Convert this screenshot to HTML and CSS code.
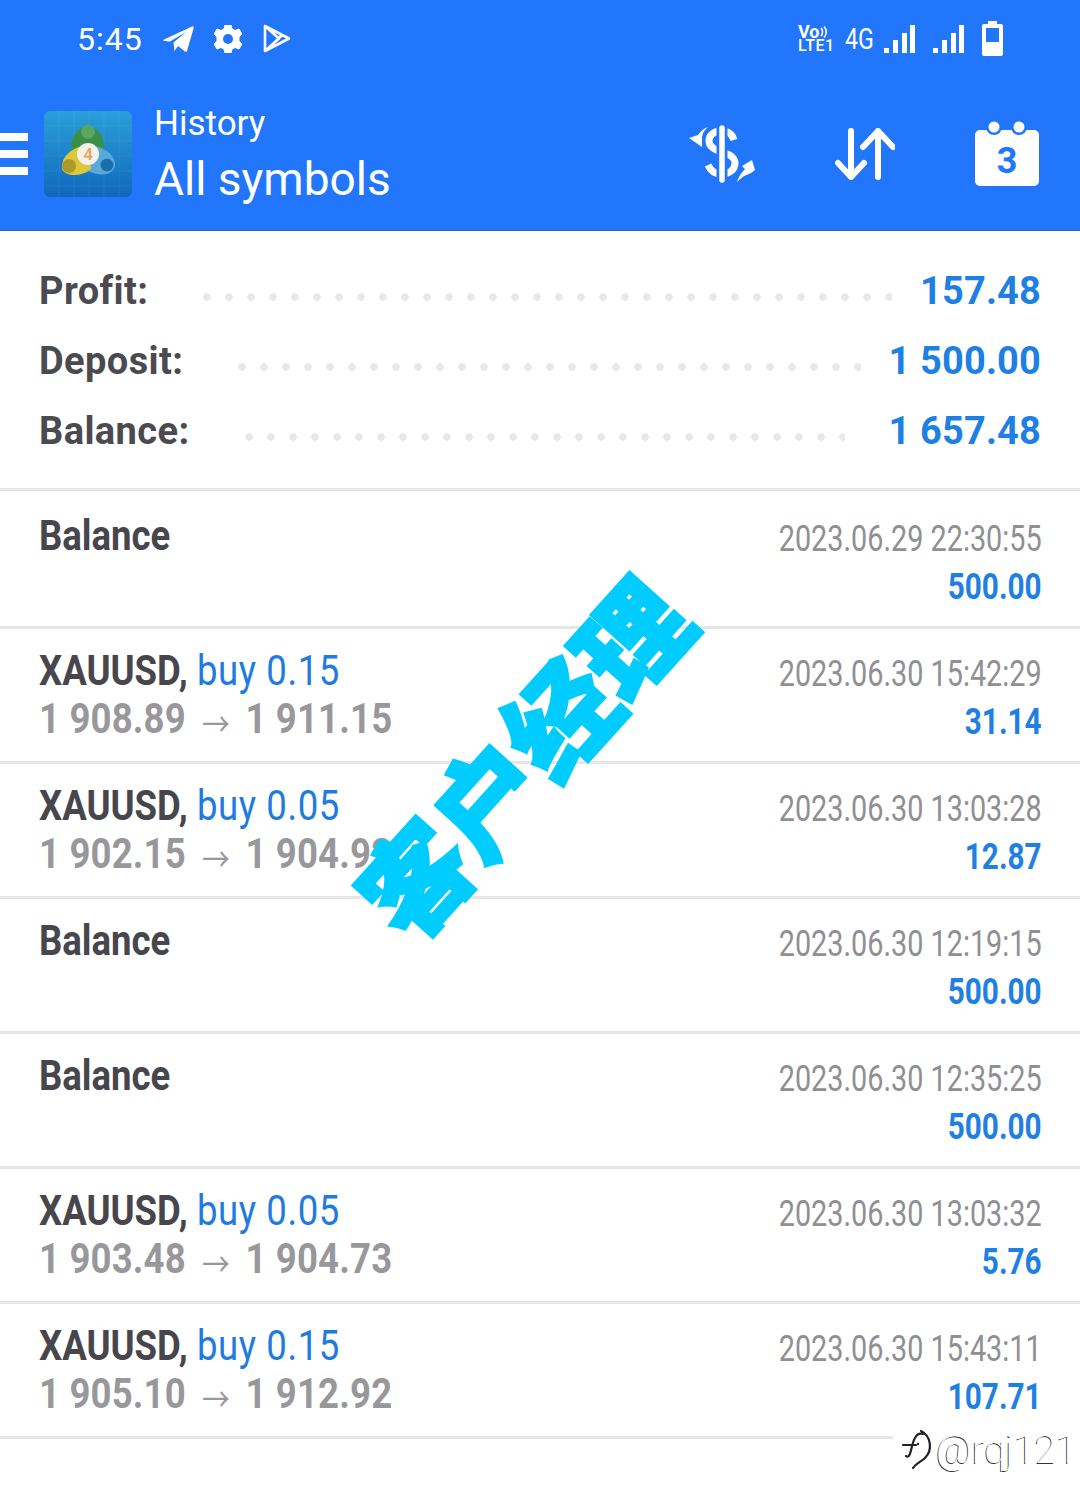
FILE: index.html
```html
<!DOCTYPE html>
<html lang="en">
<head>
  <meta charset="UTF-8">
  <title>History</title>
  <link rel="stylesheet" href="styles.css">
</head>
<body>
  <div class="page">
    <div class="header">
      <div class="status">
        <div class="status-left">
          <span class="time">5:45</span>
          <svg class="ic-send" viewBox="0 0 31 26"><path d="M1 13.500 29 .5C30.500 0 31 1 30.500 2.500L24 25C23.500 26 22.500 26 22 25.500L15 20 11.500 25 10.500 16.500 23 6 7 15.500 1.500 15C0 15 0 14 1 13.500Z" fill="#fff"/></svg>
          <svg class="ic-gear" viewBox="0 0 28 28"><path d="M11 0h6l1 4 3 1.500 4-1.500 3 5-3 3v4l3 3-3 5-4-1.500-3 1.500-1 4h-6l-1-4-3-1.500-4 1.500-3-5 3-3v-4l-3-3 3-5 4 1.500 3-1.500Z" fill="#fff" stroke="#fff" stroke-linejoin="round"/><circle cx="14" cy="14" r="5" fill="#2176fb"/></svg>
          <svg class="ic-play" viewBox="0 0 29 29"><path d="M3 2 27 14.500 3 27Z M3 2 17 14.500 3 27 M10 21 20 11" fill="none" stroke="#fff" stroke-width="2.600" stroke-linejoin="round"/></svg>
        </div>
        <div class="status-right">
          <div class="volte">
            <div class="volte-top">Vo<svg class="ic-waves" viewBox="0 0 9 14"><path d="M1 3C3 5 3 9 1 11M4 1.500C7 4.500 7 9.500 4 12.500" fill="none" stroke="#fff" stroke-width="1.600"/></svg></div>
            <div class="volte-bottom">LTE1</div>
          </div>
          <span class="net">4G</span>
          <svg class="ic-signal" viewBox="0 0 31 28"><path d="M0 23h5v5H0ZM9 15h5v13H9ZM18 8h5v20h-5ZM26 0h5v28h-5Z" fill="#fff"/></svg>
          <svg class="ic-signal" viewBox="0 0 31 28"><path d="M0 23h5v5H0ZM9 15h5v13H9ZM18 8h5v20h-5ZM26 0h5v28h-5Z" fill="#fff"/></svg>
          <svg class="ic-battery" viewBox="0 0 21 35"><path d="M6 0h9v3h4a2 2 0 0 1 2 2v28a2 2 0 0 1-2 2H2a2 2 0 0 1-2-2V5a2 2 0 0 1 2-2h4Z" fill="#fff"/><rect x="4" y="7" width="13" height="14" fill="#2176fb"/></svg>
        </div>
      </div>
      <div class="toolbar">
        <div class="burger"><i></i><i></i><i></i></div>
        <svg class="logo" viewBox="0 0 88 86">
          <defs>
            <linearGradient id="tile" x1="0" y1="0" x2="0" y2="1">
              <stop offset="0" stop-color="#2b9fd8"/>
              <stop offset="1" stop-color="#1068bd"/>
            </linearGradient>
          </defs>
          <rect width="88" height="86" rx="6" fill="url(#tile)"/>
          <path d="M15 0V86M30 0V86M45 0V86M60 0V86M75 0V86M0 15H88M0 30H88M0 45H88M0 60H88M0 75H88" stroke="#fff" stroke-opacity=".06"/>
          <path d="M27 38C27 22 36 16 44 16C53 16 61 24 60 40L44 46Z" fill="#3c8f48"/>
          <circle cx="44" cy="21" r="7" fill="#58a860"/>
          <path d="M42 36C54 32 72 42 71 55C69 64 56 66 44 60Z" fill="#58a9dc"/>
          <circle cx="63" cy="54" r="6.500" fill="#1c6ea8"/>
          <path d="M46 36C34 32 16 44 18 58C22 66 38 66 47 58Z" fill="#dcc83c"/>
          <circle cx="25" cy="55" r="7" fill="#ad9a2a"/>
          <circle cx="44" cy="43" r="11" fill="#f4f1ea"/>
          <text x="44" y="49" class="logo-num" text-anchor="middle">4</text>
        </svg>
        <div class="titles">
          <div class="title-small">History</div>
          <div class="title-big">All symbols</div>
        </div>
        <div class="actions">
          <svg class="ic-dollar" viewBox="0 0 66 58">
            <path d="M45 15C43 8 38 6 32 6C24 6 20 11 20 16C20 22 26 25 33 27C40 29 46 32 46 38C46 45 40 49 33 49C27 49 22 47 19 40" fill="none" stroke="#fff" stroke-width="7"/>
            <path d="M33 2V56" stroke="#2176fb" stroke-width="11"/>
            <path d="M33 3V55" stroke="#fff" stroke-width="5.500" stroke-linecap="round"/>
            <path d="M0 13 9 10Q13 4 19 2 14 6 13 12L13 22Z" fill="#fff"/>
            <path d="M66 45 63 35 53 41 56 44Q50 50 48 57 55 50 60 49L62 48Z" fill="#fff"/>
          </svg>
          <svg class="ic-sort" viewBox="0 0 60 52">
            <path d="M16 3V49M3 35 16 49 29 35M43 49V3M28 19 43 3 58 19" fill="none" stroke="#fff" stroke-width="6" stroke-linecap="round" stroke-linejoin="round"/>
          </svg>
          <svg class="ic-calendar" viewBox="0 0 64 65">
            <path d="M5 9H59A5 5 0 0 1 64 14V60A5 5 0 0 1 59 65H5A5 5 0 0 1 0 60V14A5 5 0 0 1 5 9Z" fill="#fff"/>
            <circle cx="19" cy="6" r="8" fill="#2176fb"/>
            <circle cx="44" cy="6" r="8" fill="#2176fb"/>
            <circle cx="19" cy="6" r="5.500" fill="#fff"/>
            <circle cx="44" cy="6" r="5.500" fill="#fff"/>
            <text x="32" y="52" class="cal-num" text-anchor="middle">3</text>
          </svg>
        </div>
      </div>
    </div>

    <div class="summary">
      <div class="summary-row"><span class="label">Profit:</span><span class="leader"></span><span class="value">157.48</span></div>
      <div class="summary-row"><span class="label">Deposit:</span><span class="leader"></span><span class="value">1 500.00</span></div>
      <div class="summary-row"><span class="label">Balance:</span><span class="leader"></span><span class="value">1 657.48</span></div>
    </div>

    <div class="list">
      <div class="row first">
        <div class="left"><div class="name">Balance</div></div>
        <div class="right"><div class="date">2023.06.29 22:30:55</div><div class="amount">500.00</div></div>
      </div>
      <div class="row">
        <div class="left">
          <div class="name">XAUUSD, <span class="side">buy 0.15</span></div>
          <div class="prices">1 908.89 <span class="arrow">→</span> 1 911.15</div>
        </div>
        <div class="right"><div class="date">2023.06.30 15:42:29</div><div class="amount">31.14</div></div>
      </div>
      <div class="row">
        <div class="left">
          <div class="name">XAUUSD, <span class="side">buy 0.05</span></div>
          <div class="prices">1 902.15 <span class="arrow">→</span> 1 904.92</div>
        </div>
        <div class="right"><div class="date">2023.06.30 13:03:28</div><div class="amount">12.87</div></div>
      </div>
      <div class="row">
        <div class="left"><div class="name">Balance</div></div>
        <div class="right"><div class="date">2023.06.30 12:19:15</div><div class="amount">500.00</div></div>
      </div>
      <div class="row">
        <div class="left"><div class="name">Balance</div></div>
        <div class="right"><div class="date">2023.06.30 12:35:25</div><div class="amount">500.00</div></div>
      </div>
      <div class="row">
        <div class="left">
          <div class="name">XAUUSD, <span class="side">buy 0.05</span></div>
          <div class="prices">1 903.48 <span class="arrow">→</span> 1 904.73</div>
        </div>
        <div class="right"><div class="date">2023.06.30 13:03:32</div><div class="amount">5.76</div></div>
      </div>
      <div class="row">
        <div class="left">
          <div class="name">XAUUSD, <span class="side">buy 0.15</span></div>
          <div class="prices">1 905.10 <span class="arrow">→</span> 1 912.92</div>
        </div>
        <div class="right"><div class="date">2023.06.30 15:43:11</div><div class="amount">107.71</div></div>
      </div>
    </div>

    <div class="stamp">客户经理</div>
    <div class="handle">
      <svg class="handle-logo" viewBox="0 0 34 42">
        <path d="M7 28C12 32 12 16 16 10C18 6 21 5 24 6M4 17H17M22 3C32 8 34 22 26 30C22 34 17 35 14 40" fill="none" stroke="#222" stroke-width="2.200" stroke-linecap="round"/>
        <circle cx="19" cy="16" r="1.200" fill="#222"/>
      </svg>
      <span>@rqj121</span>
    </div>
  </div>
</body>
</html>
```

FILE: styles.css
```css
* {
  margin: 0;
  padding: 0;
  box-sizing: border-box;
}
body {
  background-color: #fff;
  font-family: Roboto, "Noto Sans CJK SC", sans-serif;
}
.page {
  position: relative;
  width: 1080px;
  height: 1508px;
  overflow: hidden;
}

/* header */
.header {
  height: 231px;
  background-color: #2176fb;
  border-bottom: 1px solid #1a68d0;
  color: #fff;
}
.status {
  display: flex;
  justify-content: space-between;
  align-items: center;
  height: 77px;
  padding: 0 77px 0 77px;
}
.status-left {
  display: flex;
  align-items: center;
}
.time {
  font-size: 32px;
  letter-spacing: 1px;
  margin-right: 20px;
}
.ic-send {
  width: 31px;
  height: 26px;
  margin-right: 20px;
}
.ic-gear {
  width: 28px;
  height: 28px;
  margin-right: 20px;
}
.ic-play {
  width: 29px;
  height: 29px;
}
.status-right {
  display: flex;
  align-items: center;
}
.volte {
  width: 35px;
  margin-right: 12px;
}
.volte-top {
  display: flex;
  align-items: center;
  height: 15px;
  font-size: 18px;
  font-weight: 700;
  line-height: 15px;
}
.ic-waves {
  width: 9px;
  height: 14px;
}
.volte-bottom {
  height: 14px;
  font-size: 16px;
  font-weight: 500;
  line-height: 14px;
  letter-spacing: .5px;
}
.net {
  width: 29px;
  margin-right: 10px;
  font-size: 29px;
  transform: scaleX(.8);
  transform-origin: left;
}
.ic-signal {
  width: 31px;
  height: 28px;
  margin-right: 18px;
}
.ic-battery {
  width: 21px;
  height: 35px;
}
.toolbar {
  display: flex;
  align-items: center;
  height: 153px;
  padding-right: 41px;
}
.burger {
  display: flex;
  flex-direction: column;
  gap: 9px;
  width: 28px;
}
.burger i {
  display: block;
  height: 8px;
  background-color: #fff;
}
.logo {
  width: 88px;
  height: 86px;
  margin-left: 16px;
}
.logo-num {
  font-family: Roboto, sans-serif;
  font-size: 17px;
  font-weight: 500;
  fill: #eda24a;
}
.titles {
  margin-left: 22px;
  padding-top: 3px;
}
.title-small {
  font-size: 35px;
  line-height: 48px;
}
.title-big {
  font-size: 46px;
  line-height: 62px;
}
.actions {
  display: flex;
  align-items: center;
  gap: 80px;
  margin-left: auto;
}
.ic-dollar {
  width: 66px;
  height: 58px;
}
.ic-sort {
  width: 60px;
  height: 52px;
}
.ic-calendar {
  width: 64px;
  height: 65px;
}
.cal-num {
  font-family: Roboto, sans-serif;
  font-size: 36px;
  font-weight: 700;
  fill: #2176fb;
}

/* totals */
.summary {
  height: 260px;
  padding: 25px 39px 0;
  border-bottom: 3px solid #e6e6e6;
}
.summary-row {
  display: flex;
  align-items: center;
  height: 70px;
  font-size: 38px;
  font-weight: 700;
}
.label {
  color: #4a4a50;
  letter-spacing: .4px;
}
.leader {
  flex: 1;
  height: 8px;
  margin: 12px 28px 0 55px;
  background-image: radial-gradient(circle at 4px 4px, #e8e8e8 3.5px, transparent 4px);
  background-size: 22px 8px;
  background-repeat: repeat-x;
}
.summary-row:last-child .leader {
  margin-right: 44px;
}
.value {
  color: #1f80e4;
  letter-spacing: .15px;
}

/* deals */
.row {
  display: flex;
  justify-content: space-between;
  height: 135px;
  padding: 18px 38px 0 39px;
  border-bottom: 3px solid #e6e6e6;
}
.row.first {
  height: 138px;
  padding-top: 21px;
}
.left {
  transform: scaleX(.87);
  transform-origin: left top;
  white-space: nowrap;
}
.name {
  font-size: 42px;
  line-height: 48px;
  font-weight: 700;
  color: #46464c;
}
.side {
  font-weight: 400;
  letter-spacing: .7px;
  color: #1f7be0;
}
.prices {
  font-size: 42px;
  line-height: 48px;
  font-weight: 700;
  letter-spacing: .2px;
  color: #98989c;
}
.arrow {
  margin: 0 7px 0 8px;
  font-size: 32px;
  font-weight: 400;
  vertical-align: -3px;
}
.right {
  white-space: nowrap;
  padding-top: 3px;
}
.date {
  font-size: 36px;
  line-height: 48px;
  color: #8f8f94;
  text-align: right;
  transform: scaleX(.8);
  transform-origin: right;
}
.amount {
  font-size: 36px;
  line-height: 48px;
  font-weight: 700;
  color: #1f80e4;
  text-align: right;
  transform: scaleX(.825);
  transform-origin: right;
}

/* overlays */
.stamp {
  position: absolute;
  left: 520px;
  top: 755px;
  transform: translate(-50%, -50%) rotate(-48deg);
  font-family: "Noto Sans CJK SC", sans-serif;
  font-size: 108px;
  line-height: 1;
  font-weight: 900;
  white-space: nowrap;
  color: #00ccff;
  -webkit-text-stroke: 3px #00ccff;
}
.handle {
  position: absolute;
  left: 893px;
  top: 1424px;
  display: flex;
  align-items: center;
  gap: 3px;
  width: 187px;
  height: 50px;
  padding-left: 6px;
  background-color: #fff;
  font-size: 38.500px;
  font-weight: 100;
  color: #fff;
  text-shadow: -1px 1px 0 #333;
}
.handle-logo {
  width: 34px;
  height: 42px;
}
```
